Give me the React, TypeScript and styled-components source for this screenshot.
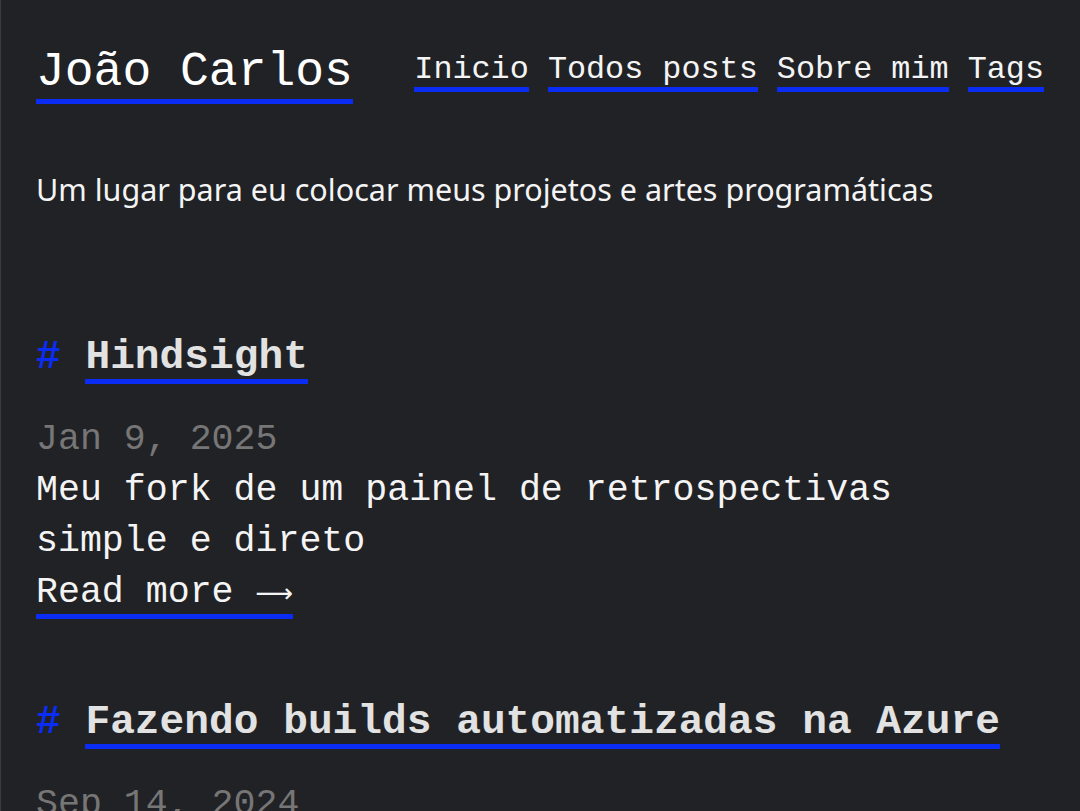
import React from "react";
import styled, { createGlobalStyle } from "styled-components";

const GlobalStyle = createGlobalStyle`
  html, body {
    margin: 0;
    padding: 0;
    background: #212226;
  }
  body {
    font-family: "Liberation Mono", monospace;
    color: #f2f2f2;
  }
`;

const BLUE = "#0b2cf3";

const Page = styled.div`
  min-height: 811px;
  box-sizing: border-box;
  border-left: 1px solid #3a3b3f;
  padding: 46px 36px 0 35px;
  overflow: hidden;
`;

const Header = styled.header`
  display: flex;
  justify-content: space-between;
  align-items: flex-start;
`;

const SiteTitle = styled.a`
  display: inline-block;
  font-family: "Liberation Mono", monospace;
  font-size: 48px;
  line-height: 52.8px;
  color: #ffffff;
  text-decoration: none;
  border-bottom: 5px solid ${BLUE};
`;

const Nav = styled.nav`
  display: flex;
  font-size: 31.8px;
  gap: 1ch;
  padding-top: 8px;
`;

const NavLink = styled.a`
  display: inline-block;
  line-height: 33px;
  color: #f4f4f4;
  text-decoration: none;
  border-bottom: 5px solid ${BLUE};
`;

const Tagline = styled.p`
  margin: 64.6px 0 0;
  font-family: "Noto Sans", sans-serif;
  font-size: 30.5px;
  line-height: 42px;
  color: #f4f4f4;
`;

const Posts = styled.main`
  display: flex;
  flex-direction: column;
  gap: 81px;
  margin-top: 125px;
`;

const Post = styled.article`
  display: flex;
  flex-direction: column;
`;

const PostTitle = styled.h2`
  margin: 0 0 30px;
  font-size: 41.2px;
  line-height: 44px;
  font-weight: 700;
  white-space: nowrap;
`;

const Hash = styled.span`
  color: ${BLUE};
`;

const TitleLink = styled.a`
  display: inline-block;
  color: #e2e2e2;
  text-decoration: none;
  line-height: 44px;
  border-bottom: 5px solid ${BLUE};
`;

const DateLine = styled.time`
  display: block;
  font-size: 36.6px;
  line-height: 51px;
  color: #767676;
`;

const Summary = styled.p`
  margin: 0;
  font-size: 36.6px;
  line-height: 51px;
  color: #f4f4f4;
`;

const MoreLine = styled.p`
  margin: 0;
  font-size: 36.6px;
  line-height: 51px;
`;

const MoreLink = styled.a`
  display: inline-block;
  line-height: 40.6px;
  color: #f4f4f4;
  text-decoration: none;
  border-bottom: 5px solid ${BLUE};
`;

const Arrow = styled.span`
  font-family: "DejaVu Sans", sans-serif;
  font-size: 0.72em;
`;

const posts = [
  {
    title: "Hindsight",
    date: "Jan 9, 2025",
    summary: "Meu fork de um painel de retrospectivas simple e direto",
  },
  {
    title: "Fazendo builds automatizadas na Azure",
    date: "Sep 14, 2024",
    summary: "Como configurar pipelines de build automatizadas",
  },
];

export default function App() {
  return (
    <>
      <GlobalStyle />
      <Page>
        <Header>
          <SiteTitle href="#">João Carlos</SiteTitle>
          <Nav>
            <NavLink href="#">Inicio</NavLink>
            <NavLink href="#">Todos posts</NavLink>
            <NavLink href="#">Sobre mim</NavLink>
            <NavLink href="#">Tags</NavLink>
          </Nav>
        </Header>
        <Tagline>Um lugar para eu colocar meus projetos e artes programáticas</Tagline>
        <Posts>
          {posts.map((p) => (
            <Post key={p.title}>
              <PostTitle>
                <Hash>#</Hash> <TitleLink href="#">{p.title}</TitleLink>
              </PostTitle>
              <DateLine>{p.date}</DateLine>
              <Summary>{p.summary}</Summary>
              <MoreLine>
                <MoreLink href="#">
                  Read more <Arrow>⟶</Arrow>
                </MoreLink>
              </MoreLine>
            </Post>
          ))}
        </Posts>
      </Page>
    </>
  );
}
